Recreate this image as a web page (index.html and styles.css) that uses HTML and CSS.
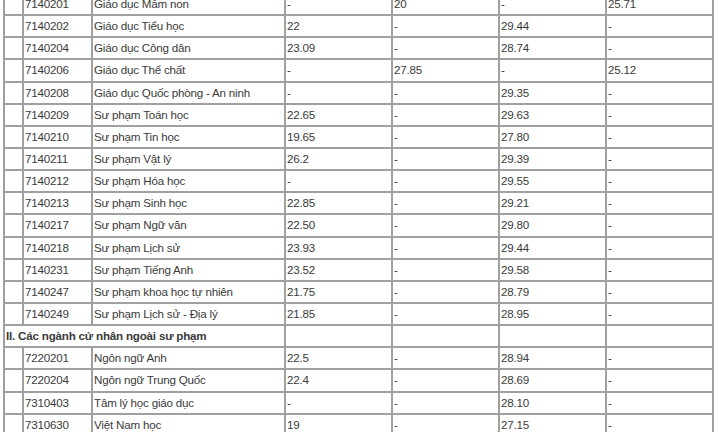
FILE: index.html
```html
<!DOCTYPE html>
<html lang="vi">
<head>
<meta charset="utf-8">
<link rel="stylesheet" href="styles.css">
</head>
<body>
<table class="scores">
<colgroup>
<col class="c-blank"><col class="c-code"><col class="c-name"><col class="c-num"><col class="c-num"><col class="c-num"><col class="c-num">
</colgroup>
<tbody>
<tr><td></td><td>7140201</td><td>Giáo dục Mầm non</td><td>-</td><td>20</td><td>-</td><td>25.71</td></tr>
<tr><td></td><td>7140202</td><td>Giáo dục Tiểu học</td><td>22</td><td>-</td><td>29.44</td><td>-</td></tr>
<tr><td></td><td>7140204</td><td>Giáo dục Công dân</td><td>23.09</td><td>-</td><td>28.74</td><td>-</td></tr>
<tr><td></td><td>7140206</td><td>Giáo dục Thể chất</td><td>-</td><td>27.85</td><td>-</td><td>25.12</td></tr>
<tr><td></td><td>7140208</td><td>Giáo dục Quốc phòng - An ninh</td><td>-</td><td>-</td><td>29.35</td><td>-</td></tr>
<tr><td></td><td>7140209</td><td>Sư phạm Toán học</td><td>22.65</td><td>-</td><td>29.63</td><td>-</td></tr>
<tr><td></td><td>7140210</td><td>Sư phạm Tin học</td><td>19.65</td><td>-</td><td>27.80</td><td>-</td></tr>
<tr><td></td><td>7140211</td><td>Sư phạm Vật lý</td><td>26.2</td><td>-</td><td>29.39</td><td>-</td></tr>
<tr><td></td><td>7140212</td><td>Sư phạm Hóa học</td><td>-</td><td>-</td><td>29.55</td><td>-</td></tr>
<tr><td></td><td>7140213</td><td>Sư phạm Sinh học</td><td>22.85</td><td>-</td><td>29.21</td><td>-</td></tr>
<tr><td></td><td>7140217</td><td>Sư phạm Ngữ văn</td><td>22.50</td><td>-</td><td>29.80</td><td>-</td></tr>
<tr><td></td><td>7140218</td><td>Sư phạm Lịch sử</td><td>23.93</td><td>-</td><td>29.44</td><td>-</td></tr>
<tr><td></td><td>7140231</td><td>Sư phạm Tiếng Anh</td><td>23.52</td><td>-</td><td>29.58</td><td>-</td></tr>
<tr><td></td><td>7140247</td><td>Sư phạm khoa học tự nhiên</td><td>21.75</td><td>-</td><td>28.79</td><td>-</td></tr>
<tr><td></td><td>7140249</td><td>Sư phạm Lịch sử - Địa lý</td><td>21.85</td><td>-</td><td>28.95</td><td>-</td></tr>
<tr class="section"><td colspan="3">II. Các ngành cử nhân ngoài sư phạm</td><td></td><td></td><td></td><td></td></tr>
<tr><td></td><td>7220201</td><td>Ngôn ngữ Anh</td><td>22.5</td><td>-</td><td>28.94</td><td>-</td></tr>
<tr><td></td><td>7220204</td><td>Ngôn ngữ Trung Quốc</td><td>22.4</td><td>-</td><td>28.69</td><td>-</td></tr>
<tr><td></td><td>7310403</td><td>Tâm lý học giáo dục</td><td>-</td><td>-</td><td>28.10</td><td>-</td></tr>
<tr><td></td><td>7310630</td><td>Việt Nam học</td><td>19</td><td>-</td><td>27.15</td><td>-</td></tr>
</tbody>
</table>
</body>
</html>
```
FILE: styles.css
```css
html, body {
  margin: 0;
  padding: 0;
  background: #fff;
}
body {
  padding-left: 3px;
  overflow: hidden;
}
.scores {
  margin-top: -8px;
  border-collapse: collapse;
  table-layout: fixed;
  width: 709px;
  font-family: "Liberation Sans", Arial, sans-serif;
  font-size: 11.6px;
  letter-spacing: -0.2px;
  color: #3a3a3a;
}
.c-blank { width: 19px; }
.c-code { width: 69px; }
.c-name { width: 193px; }
.c-num { width: 107px; }
.scores tr { height: 22.15px; }
.scores td {
  border: 2px solid #a0a0a0;
  padding: 0 1px;
  white-space: nowrap;
  overflow: hidden;
  vertical-align: middle;
  line-height: 14px;
}
.section td { font-weight: bold; }
```
